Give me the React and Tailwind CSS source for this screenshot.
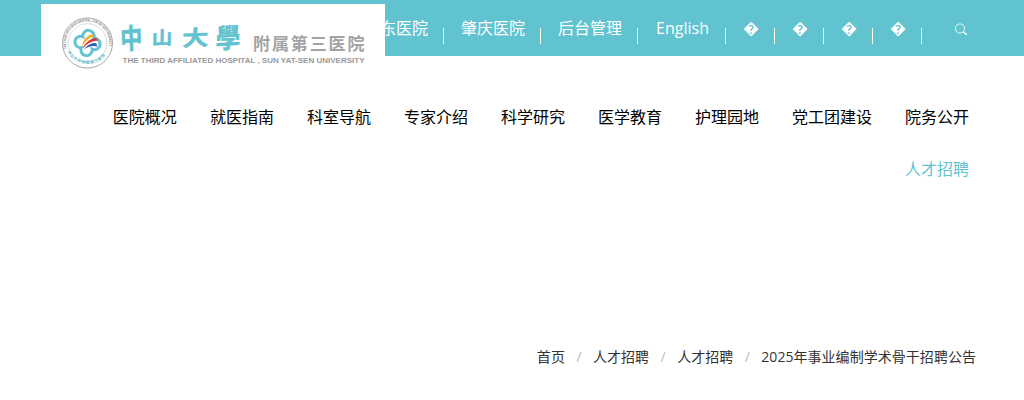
const topLinks = [
  { label: '粤东医院', width: 'w-16' },
  { label: '肇庆医院', width: 'w-16' },
  { label: '后台管理', width: 'w-16' },
  { label: 'English', width: 'w-[55px]' },
  { label: '\uFFFD', width: 'w-4' },
  { label: '\uFFFD', width: 'w-4' },
  { label: '\uFFFD', width: 'w-4' },
  { label: '\uFFFD', width: 'w-4' },
]

const navItems = [
  '医院概况',
  '就医指南',
  '科室导航',
  '专家介绍',
  '科学研究',
  '医学教育',
  '护理园地',
  '党工团建设',
  '院务公开',
  '人才招聘',
]

const crumbs = ['首页', '人才招聘', '人才招聘', '2025年事业编制学术骨干招聘公告']

function Logo() {
  return (
    <svg width="344" height="76" viewBox="41 4 344 76" className="block">
      <defs>
        <path id="ring-top" d="M66.6 48.5 A21.6 21.6 0 1 1 108.4 48.5" />
        <path id="ring-bottom" d="M66 49 A23 23 0 0 0 109 49" />
      </defs>

      {/* Seal */}
      <circle cx="87.5" cy="43" r="25" fill="#fff" stroke="#9b9b9e" strokeWidth="0.9" />
      <circle cx="87.5" cy="43" r="19.3" fill="none" stroke="#b5b5b8" strokeWidth="0.5" />
      <text fontSize="3.3" fontWeight="700" fill="#77777a">
        <textPath href="#ring-top" textLength="76" lengthAdjust="spacingAndGlyphs">
          THE THIRD AFFILIATED HOSPITAL, SUN YAT-SEN UNIVERSITY
        </textPath>
      </text>
      <text fontSize="4" fontWeight="700" fill="#5fc0cf">
        <textPath href="#ring-bottom" startOffset="3" textLength="45">中山大学附属第三医院</textPath>
      </text>

      {/* Clover */}
      <g transform="rotate(8 87.5 43)">
        <path
          d="M82 37.5 A5.7 5.7 0 1 1 93 37.5 A5.7 5.7 0 1 1 93 48.5 A5.7 5.7 0 1 1 82 48.5 A5.7 5.7 0 1 1 82 37.5Z"
          fill="#fff"
          stroke="#5fc3d1"
          strokeWidth="3"
        />
      </g>
      <path d="M81.8 47.5 Q83 36.5 92.5 34 L94 36.3 Q85.5 39 81.8 47.5Z" fill="#f5b12d" />
      <path d="M82.6 48.8 Q86 39.5 96 37.7 L98 40.5 Q88 41.3 82.6 48.8Z" fill="#e3343a" />
      <path d="M83.8 49.8 Q89 42.3 96.3 43.2 L97.3 46.5 Q90 44.7 83.8 49.8Z" fill="#2d62b3" />

      {/* Hospital name */}
      <g
        fill="#62c2cf"
        stroke="#62c2cf"
        strokeWidth="0.5"
        strokeLinejoin="round"
        fontSize="24"
        fontWeight="700"
        fontFamily="'Noto Sans CJK TC', sans-serif"
      >
        <text transform="translate(120.5 49.5) rotate(-5) skewX(-3) scale(0.93 1.16)">中</text>
        <text transform="translate(151.5 45) rotate(-3) skewX(-4) scale(0.87 0.76)">山</text>
        <text transform="translate(182 46) rotate(-2) skewX(-3) scale(1.1 0.88)">大</text>
        <text transform="translate(215.5 48.5) rotate(-3) skewX(-4) scale(1.03 1.12)">學</text>
      </g>
      <text x="253" y="50" fontSize="17" fontWeight="700" fill="#a3a3a3" textLength="111.5">
        附属第三医院
      </text>
      <text
        x="122.5"
        y="62.8"
        fontSize="6.5"
        fontWeight="700"
        fill="#999"
        fontFamily="'Liberation Sans', sans-serif"
        textLength="242"
        lengthAdjust="spacingAndGlyphs"
      >
        THE THIRD AFFILIATED HOSPITAL , SUN YAT-SEN UNIVERSITY
      </text>
    </svg>
  )
}

function SearchIcon() {
  return (
    <svg width="13" height="13" viewBox="0 0 13 13" fill="none" stroke="#fff">
      <circle cx="5" cy="5.5" r="4.6" strokeWidth="0.9" />
      <path d="M8.5 9 L11.8 11.7" strokeWidth="1.6" />
    </svg>
  )
}

export default function App() {
  return (
    <div className="relative h-[400px] w-full overflow-hidden bg-white font-['Open_Sans','Noto_Sans_CJK_SC',sans-serif] text-base whitespace-nowrap">
      {/* Top bar */}
      <div className="flex h-14 items-start justify-end bg-[#61c2d0] pr-14 text-white">
        {topLinks.map((link, i) => (
          <div key={i} className="flex">
            <a className={`${link.width} mr-[15px] flex h-14 justify-center leading-[56px]`}>{link.label}</a>
            <span className="mt-7 mr-[17px] h-4 w-px bg-white" />
          </div>
        ))}
        <span className="mt-[23px] ml-4">
          <SearchIcon />
        </span>
      </div>

      {/* Logo sits over the top bar */}
      <div className="absolute top-1 left-[41px] bg-white font-['Noto_Sans_CJK_SC',sans-serif]">
        <Logo />
      </div>

      {/* Main navigation */}
      <nav className="flex flex-wrap justify-end gap-x-[33px] pt-[35px] pr-[55px] pl-[80px] text-black">
        {navItems.map((item) => (
          <a key={item} className="h-[52px] leading-[52px] last:text-[#61c2d0]">
            {item}
          </a>
        ))}
      </nav>

      {/* Breadcrumb */}
      <div className="mt-[151px] flex justify-end pr-12 text-sm leading-[22px] text-[#333]">
        {crumbs.map((crumb, i) => (
          <div key={i} className="flex">
            {i > 0 && <span className="w-7 text-center text-[#bbb]">/</span>}
            <a className="tracking-[0.04px]">{crumb}</a>
          </div>
        ))}
      </div>
    </div>
  )
}
